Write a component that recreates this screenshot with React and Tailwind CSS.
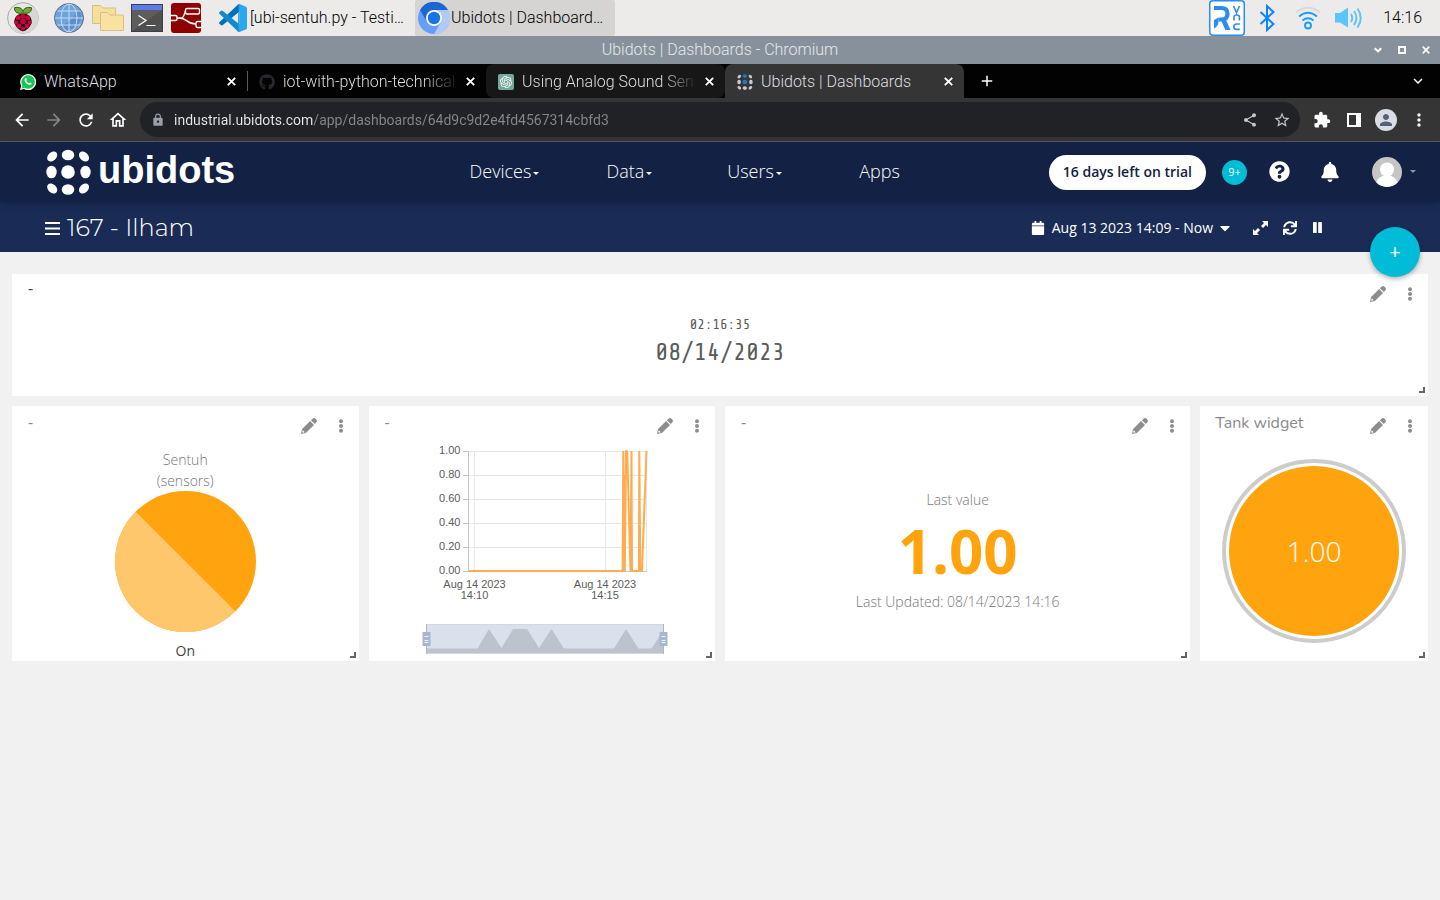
import React from "react";
import {
  MdArrowBack,
  MdArrowForward,
  MdRefresh,
  MdOutlineHome,
  MdLock,
  MdShare,
  MdStarBorder,
  MdExtension,
  MdMoreVert,
  MdPerson,
  MdAdd,
  MdKeyboardArrowDown,
} from "react-icons/md";
import {
  FaBell,
  FaQuestionCircle,
  FaCalendar,
  FaSync,
  FaEllipsisV,
  FaGithub,
  FaCaretDown,
} from "react-icons/fa";
import { SiOpenai } from "react-icons/si";

const roboto = "font-['Roboto','Liberation_Sans',sans-serif]";
const openSans = "font-['Open_Sans','Noto_Sans',sans-serif]";

/* ---------- desktop panel icons ---------- */

function RaspberryIcon() {
  const berries = [
    [16, 14.2, 2.7], [11.2, 15.8, 2.7], [20.8, 15.8, 2.7], [16, 19.3, 3],
    [9.2, 20.6, 2.3], [22.8, 20.6, 2.3], [12, 24, 2.6], [20, 24, 2.6], [16, 26.6, 2.3],
  ];
  return (
    <svg viewBox="0 0 32 32" className="size-8" aria-hidden="true">
      <circle cx="16" cy="16" r="15.4" fill="#e8e8e8" stroke="#a9a9a9" />
      <path d="M5 27 27 5A15 15 0 0 1 5 27Z" fill="#d6d6d6" />
      <path d="M16 11.500c-6 .2-9.300 4.500-8.500 9 .8 4.500 5.500 8.500 8.500 8.800 3-.3 7.700-4.300 8.500-8.800.8-4.500-2.500-8.800-8.500-9Z" fill="#2a0611" />
      {berries.map(([x, y, r]) => (
        <circle key={`${x}-${y}`} cx={x} cy={y} r={r - 0.2} fill="#c7053d" />
      ))}
      <path d="M15.800 11C10 12.400 7.200 9.400 7.500 5.700c4-1 7.600.2 8.500 3.800.9-3.600 4.500-4.800 8.500-3.800.300 3.700-2.500 6.700-8.700 5.300Z" fill="#6cae2f" stroke="#1d3b0b" strokeWidth=".8" />
    </svg>
  );
}

function GlobeIcon() {
  return (
    <svg viewBox="0 0 30 30" className="size-[30px]" aria-hidden="true">
      <circle cx="15" cy="15" r="14.500" fill="#70a2dc" stroke="#5b6f86" />
      <path d="M4 24C12 22 22 14 25 5a14.500 14.500 0 0 1-21 19Z" fill="#5f8fcb" />
      <g fill="none" stroke="#c3dbf5" strokeWidth="1">
        <path d="M15 1v28M1 15h28M3.500 8h23M3.500 22h23" />
        <ellipse cx="15" cy="15" rx="8" ry="14" />
      </g>
    </svg>
  );
}

function FoldersIcon() {
  return (
    <svg viewBox="0 0 32 28" className="h-7 w-8" aria-hidden="true">
      <path d="M.5 19.500V1.500h8l2.500 2.500h12.500v15.500Z" fill="#f4df9c" stroke="#d9bf87" />
      <path d="M8.500 26.500V8.500h7l2.500 2.500h13.500v15.500Z" fill="#f7e2a0" stroke="#d9bf87" />
    </svg>
  );
}

function TerminalIcon() {
  return (
    <svg viewBox="0 0 32 28" className="h-7 w-8" aria-hidden="true">
      <rect x=".5" y=".5" width="31" height="27" fill="#5d5d5d" stroke="#3a3f4c" />
      <path d="M1 27 31 6v21Z" fill="#4f4f4f" />
      <rect x="1" y="1" width="30" height="5" fill="#5d7be8" />
      <path d="m7.500 11.500 7.500 5-7.500 5M15.500 21.500h9" fill="none" stroke="#fff" strokeWidth="1.200" />
    </svg>
  );
}

function NodeFlowIcon() {
  return (
    <svg viewBox="0 0 30 30" className="size-[30px]" aria-hidden="true">
      <rect width="30" height="30" rx="3" fill="#8f0000" />
      <g fill="none" stroke="#fff" strokeWidth="1.400">
        <path d="M0 12.500h4.500q1.500 0 1.500 1.500v2q0 1.500-1.500 1.500H0M6 15h4c4 0 3-7 5-7M8 15c9 0 7 6 17 6" />
        <rect x="14.500" y="5.500" width="14" height="5.500" rx="1.500" />
        <path d="M30 18.500h-3.500q-1.500 0-1.500 1.500v3q0 1.500 1.500 1.500H30" />
      </g>
    </svg>
  );
}

function EditorIcon() {
  return (
    <svg viewBox="0 0 28 28" className="size-7" aria-hidden="true">
      <path d="M20.500 0 27 2.800q1 .5 1 1.500v19.400q0 1-1 1.500L20.500 28Z" fill="#2aa8ee" />
      <path d="M20.500 0v7.500L3.500 21.300q-.7.500-1.300 0L.4 19.700q-.7-.7 0-1.400L19 .5Z" fill="#0070b8" />
      <path d="M20.500 28v-7.500L3.500 6.700q-.7-.5-1.300 0L.4 8.300q-.7.700 0 1.400L19 27.500Z" fill="#1089d4" />
      <path d="M20.500 0v28q-1 0-1.700-.7L19.500 0Z" fill="#1c97e0" />
    </svg>
  );
}

function ChromiumIcon() {
  return (
    <svg viewBox="0 0 32 32" className="size-8" aria-hidden="true">
      <circle cx="16" cy="16" r="16" fill="#669df6" />
      <path d="M16 16 30 8A16 16 0 0 0 2.100 8l7 12Z" fill="#1967d2" />
      <path d="M16 8h14a16 16 0 0 1-14 24l7-12Z" fill="#aecbfa" />
      <circle cx="16" cy="16" r="8" fill="#fff" />
      <circle cx="16" cy="16" r="6.200" fill="#1a73e8" />
    </svg>
  );
}

function VncIcon() {
  return (
    <svg viewBox="0 0 36 36" className="size-9" role="img" aria-label="VNC server">
      <rect x=".75" y=".75" width="34.500" height="34.500" rx="3" fill="#fff" stroke="#2d8cf0" strokeWidth="1.500" />
      <path d="M5 8h7.500q6 0 6 5.700T12.500 19.500H9.500" fill="none" stroke="#2d8cf0" strokeWidth="4.200" />
      <path d="M12 20h5l4.500 10h-5.200ZM5 28.500v-8.500l4.500-2.600v3.800q0 5-4.500 7.300Z" fill="#2d8cf0" />
      <g fill="none" stroke="#2d8cf0" strokeWidth="1.600">
        <path d="m24.500 6 3 6.500 3-6.500M25 20.500v-3.500q0-2 2.700-2t2.700 2v3.500M30.800 24h-3q-3 0-3 2.700t3 2.700h3" />
      </g>
    </svg>
  );
}

function BluetoothIcon() {
  return (
    <svg viewBox="0 0 16 28" className="h-7 w-4" role="img" aria-label="Bluetooth">
      <path d="m1.500 8 13 12L8 26V2l6.500 6-13 12" fill="none" stroke="#0a84ff" strokeWidth="2" />
    </svg>
  );
}

function WifiIcon() {
  return (
    <svg viewBox="0 0 26 24" className="h-6 w-[26px]" role="img" aria-label="Wireless network">
      <g fill="none" strokeWidth="1.900">
        <path d="M1 6.500q12-9.500 24 0" stroke="#d9d9d9" />
        <path d="M4 10.500q9-7.500 18 0M7.500 14.500q5.500-4.500 11 0" stroke="#1b9df5" />
        <circle cx="13" cy="19.500" r="3" stroke="#1b9df5" />
      </g>
    </svg>
  );
}

function VolumeIcon() {
  return (
    <svg viewBox="0 0 27 22" className="h-[22px] w-[27px]" role="img" aria-label="Volume">
      <path d="M0 6h5l8-5.500v20L5 15.500H0Z" fill="#5ac4fb" />
      <g fill="none" stroke="#5ac4fb" strokeWidth="1.900">
        <path d="M16 7q2.500 4 0 8M19 4q5 7 0 14M22.500 1.500q6.500 9.500 0 19" />
      </g>
    </svg>
  );
}

/* ---------- favicons, logo and small glyphs ---------- */

function WhatsAppFavicon() {
  return (
    <svg viewBox="0 0 16 16" className="size-4 shrink-0" aria-hidden="true">
      <path d="M0 16 1.200 12A8 8 0 1 1 4 14.900Z" fill="#fff" />
      <path d="m1.600 14.400.8-3A6.700 6.700 0 1 1 4.700 13.700Z" fill="#17c653" />
      <path d="M5.200 4.200c.5-.5 1-.3 1.200.2l.5 1.200c.1.400-.6.900-.6 1.200.5 1.100 1.400 1.900 2.600 2.400.4 0 .8-.9 1.100-.8l1.400.7c.4.3.1 1.100-.4 1.500-.8.600-1.900.4-2.900 0C6.300 9.800 4.900 8 4.600 6.800c-.2-1 0-1.900.6-2.600Z" fill="#fff" />
    </svg>
  );
}

function GptFavicon() {
  return (
    <span className="flex size-4 shrink-0 items-center justify-center rounded-[2px] bg-[#74aa9c] text-white">
      <SiOpenai size={12} />
    </span>
  );
}

const dotRing = [
  [5.200, 5.500, 5.800, 4.100, -45], [21, 4, 6.300, 5.200, 0], [37, 5.500, 5.800, 4.100, 45],
  [4.500, 21, 5.200, 6.300, 0], [38.500, 21, 5.200, 6.300, 0],
  [5.200, 37.500, 5.800, 4.100, 45], [21, 38.500, 6.300, 5.200, 0], [37, 37.500, 5.800, 4.100, -45],
];

function DotMark({ className, ring, core, top }) {
  return (
    <svg viewBox="-1 -2 45 46" className={className} aria-hidden="true">
      {dotRing.map(([x, y, rx, ry, a], i) => (
        <ellipse key={i} cx={x} cy={y} rx={rx} ry={ry} fill={i === 1 ? top : ring} transform={`rotate(${a} ${x} ${y})`} />
      ))}
      <circle cx="21" cy="21" r="6.800" fill={core} />
    </svg>
  );
}

function PencilIcon() {
  return (
    <svg viewBox="0 0 16 16" className="size-4" aria-hidden="true">
      <path d="M11.300.9q1.700-1.700 3.200-.1l.8.800q1.400 1.500-.1 3l-1.400 1.400-3.900-3.700Z" fill="currentColor" />
      <path d="M9.100 3.100 13 6.900 4.900 14.900 0 16l1.100-5Z" fill="currentColor" />
      <path d="m1.700 12.300 2 2-1.800.5-.7-.7Z" fill="#fff" />
    </svg>
  );
}

function ExpandIcon() {
  return (
    <svg viewBox="0 0 15 14" className="h-[14px] w-[15px]" fill="currentColor" aria-hidden="true">
      <path d="M9 0h6v6l-2-2-3 3-2-2 3-3ZM6 14H0V8l2 2 3-3 2 2-3 3Z" />
    </svg>
  );
}

function PauseIcon() {
  return (
    <svg viewBox="0 0 9 11" className="h-[11px] w-[9px]" fill="currentColor" aria-hidden="true">
      <rect width="3.700" height="11" rx=".6" />
      <rect x="5.200" width="3.700" height="11" rx=".6" />
    </svg>
  );
}

function CrossIcon({ className }) {
  return (
    <svg viewBox="0 0 9 9" className={className} aria-hidden="true">
      <path d="m.8.800 7.400 7.400m0-7.400L.8 8.200" fill="none" stroke="currentColor" strokeWidth="1.900" />
    </svg>
  );
}

/* ---------- browser chrome ---------- */

function DesktopPanel() {
  return (
    <header className={`flex h-9 items-center bg-[#edebea] pl-[7px] pr-[18px] text-base font-light text-black ${roboto}`}>
      <button aria-label="Menu"><RaspberryIcon /></button>
      <button aria-label="Web browser" className="ml-[15px]"><GlobeIcon /></button>
      <button aria-label="File manager" className="ml-2"><FoldersIcon /></button>
      <button aria-label="Terminal" className="ml-[7px]"><TerminalIcon /></button>
      <button aria-label="Node-RED" className="ml-2"><NodeFlowIcon /></button>
      <button className="ml-[15px] flex h-9 w-[199px] items-center gap-[3px] whitespace-nowrap pl-[3px]">
        <EditorIcon />
        <span>[ubi-sentuh.py - Testi…</span>
      </button>
      <button className="flex h-9 w-[200px] items-center gap-px whitespace-nowrap rounded-[2px] bg-[#d5d4d2] pl-[3px]">
        <ChromiumIcon />
        <span>Ubidots | Dashboard…</span>
      </button>
      <div className="ml-auto flex items-center">
        <VncIcon />
        <span className="ml-[14px]"><BluetoothIcon /></span>
        <span className="ml-5"><WifiIcon /></span>
        <span className="ml-[14px]"><VolumeIcon /></span>
        <time className="ml-[21px]">14:16</time>
      </div>
    </header>
  );
}

function WindowTitle() {
  return (
    <div className={`grid h-7 grid-cols-[1fr_auto_1fr] items-center bg-[#87919b] px-[10px] text-base font-light text-[#e4e8eb] ${roboto}`}>
      <span />
      <span>Ubidots | Dashboards - Chromium</span>
      <div className="flex items-center gap-4 justify-self-end text-white">
        <button aria-label="Minimize">
          <svg viewBox="0 0 8 8" className="size-2"><path d="m.7 2.300 3.300 3 3.300-3" fill="none" stroke="currentColor" strokeWidth="2" /></svg>
        </button>
        <button aria-label="Maximize">
          <svg viewBox="0 0 8 8" className="size-2"><rect x="1" y="1" width="6" height="6" fill="none" stroke="currentColor" strokeWidth="2" /></svg>
        </button>
        <button aria-label="Close"><CrossIcon className="size-2" /></button>
      </div>
    </div>
  );
}

function Tab({ icon, title, tone, fade }) {
  return (
    <div className={`flex h-[34px] w-[239px] items-center pl-3 pr-[11px] pt-px ${tone}`}>
      {icon}
      <button
        className={`ml-2 flex-1 whitespace-nowrap text-left text-[#dedfe1] ${fade ? "[mask-image:linear-gradient(to_right,black_76%,transparent_96%)]" : ""}`}
      >
        {title}
      </button>
      <button aria-label={`Close ${title}`} className="text-white"><CrossIcon className="size-[9px]" /></button>
    </div>
  );
}

function TabStrip() {
  return (
    <div className={`flex h-[34px] items-center bg-[#020202] px-2 text-base font-light ${roboto}`}>
      <Tab icon={<WhatsAppFavicon />} title="WhatsApp" tone="" />
      <Tab
        icon={<FaGithub size={16} color="#24292f" className="shrink-0" />}
        title="iot-with-python-technical"
        tone="bg-[linear-gradient(#5a5a5a,#5a5a5a)] bg-[length:1px_20px] bg-[position:left_center] bg-no-repeat"
        fade
      />
      <Tab icon={<GptFavicon />} title="Using Analog Sound Sen" tone="rounded-lg bg-[#171717]" fade />
      <Tab
        icon={<DotMark className="size-4 shrink-0" ring="#c9cbce" core="#1f7ac4" top="#1f7ac4" />}
        title="Ubidots | Dashboards"
        tone="rounded-t-lg bg-[#353535]"
      />
      <button aria-label="New tab" className="ml-[14px] text-white"><MdAdd size={18} /></button>
      <button aria-label="Search tabs" className="ml-auto mr-[5px] text-white"><MdKeyboardArrowDown size={18} /></button>
    </div>
  );
}

function Toolbar() {
  return (
    <div className={`flex h-11 items-center border-b border-[#5a5b5d] bg-[#353535] pl-3 pr-[11px] text-white ${roboto}`}>
      <div className="flex items-center gap-3">
        <button aria-label="Back"><MdArrowBack size={20} /></button>
        <button aria-label="Forward" className="text-[#858585]"><MdArrowForward size={20} /></button>
        <button aria-label="Reload"><MdRefresh size={20} /></button>
        <button aria-label="Home"><MdOutlineHome size={20} /></button>
      </div>
      <div className="ml-3 flex h-[35px] flex-1 items-center rounded-full bg-[#202226] pl-[11px] pr-[9px]">
        <MdLock size={14} className="text-[#9aa0a6]" />
        <input
          aria-label="Address"
          readOnly
          value="industrial.ubidots.com/app/dashboards/64d9c9d2e4fd4567314cbfd3"
          className="ml-[9px] min-w-0 flex-1 bg-[linear-gradient(to_right,#e8eaed_139px,#85878b_139px)] bg-clip-text text-sm text-transparent outline-none"
        />
        <button aria-label="Share" className="text-[#c3c5c8]"><MdShare size={16} /></button>
        <button aria-label="Bookmark this page" className="ml-[15px] text-[#c3c5c8]"><MdStarBorder size={18} /></button>
      </div>
      <button aria-label="Extensions" className="ml-[13px]"><MdExtension size={18} /></button>
      <button aria-label="Side panel" className="ml-4">
        <svg viewBox="0 0 14 14" className="size-[14px]"><path d="M0 0h14v14H0ZM2 2v10h7V2Z" fill="currentColor" fillRule="evenodd" /></svg>
      </button>
      <button aria-label="Profile" className="ml-[14px] flex size-[22px] items-center justify-center rounded-full bg-[#dadde3] text-[#55617a]">
        <MdPerson size={18} />
      </button>
      <button aria-label="Browser menu" className="ml-3"><MdMoreVert size={20} /></button>
    </div>
  );
}

/* ---------- application header ---------- */

function Caret({ className = "" }) {
  return <span className={`inline-block border-x-[3px] border-t-[3px] border-x-transparent border-t-current ${className}`} />;
}

const navItems = [
  { label: "Devices", menu: true },
  { label: "Data", menu: true },
  { label: "Users", menu: true },
  { label: "Apps", menu: false },
];

function AppHeader() {
  return (
    <div className={`flex h-[60px] items-center bg-[#132144] pb-px pr-6 text-white shadow-[0_2px_6px_rgba(0,0,0,0.25)] ${openSans}`}>
      <a href="#home" aria-label="ubidots" className="flex w-[442px] items-center gap-[7px] pl-[46px]">
        <DotMark className="h-[46px] w-[45px] shrink-0" ring="#fff" core="#fff" top="#fff" />
        <span className="pb-1 font-['Liberation_Sans',Arial,sans-serif] text-[38px] font-bold leading-[38px]">ubidots</span>
      </a>
      <nav className="grid w-[500px] grid-cols-4 pb-px">
        {navItems.map((n) => (
          <a key={n.label} href={`#${n.label.toLowerCase()}`} className="flex items-center justify-center gap-[2px] text-lg font-light">
            {n.label}
            {n.menu && <Caret className="mt-1" />}
          </a>
        ))}
      </nav>
      <div className="ml-auto flex items-center">
        <button className="mt-px h-[35px] whitespace-nowrap rounded-full bg-white px-[14px] text-sm font-semibold text-[#132144]">
          16 days left on trial
        </button>
        <button aria-label="Notifications 9+" className="ml-4 mt-px size-[25px] rounded-full bg-[#00bcd6] text-[11px]">9+</button>
        <button aria-label="Help" className="ml-[22px]"><FaQuestionCircle size={21} /></button>
        <button aria-label="Alerts" className="ml-[30px]"><FaBell size={20} /></button>
        <button aria-label="Account" className="ml-8 flex items-center gap-2 text-[#8d95a8]">
          <svg viewBox="0 0 30 30" className="size-[30px]">
            <clipPath id="avatar"><circle cx="15" cy="15" r="15" /></clipPath>
            <g clipPath="url(#avatar)">
              <rect width="30" height="30" fill="#c5c5c5" />
              <circle cx="15" cy="12.500" r="7" fill="#fff" />
              <ellipse cx="15" cy="28" rx="11" ry="10" fill="#fff" />
            </g>
          </svg>
          <Caret />
        </button>
      </div>
    </div>
  );
}

function DashboardBar() {
  return (
    <div className={`relative flex h-[50px] items-center bg-[#1a2c55] pl-[45px] pr-[118px] pt-px text-white ${openSans}`}>
      <button aria-label="Dashboards menu" className="mt-[2px]">
        <svg viewBox="0 0 15 13" className="h-[13px] w-[15px]"><path d="M0 1h15M0 6.500h15M0 12h15" stroke="currentColor" strokeWidth="2" /></svg>
      </button>
      <h1 className="ml-[7px] font-['Montserrat','Inter',sans-serif] text-2xl font-light">167 - Ilham</h1>
      <button className="ml-auto flex items-center whitespace-nowrap text-sm">
        <FaCalendar size={14} />
        <span className="ml-[7px]">Aug 13 2023 14:09 - Now</span>
        <FaCaretDown size={16} className="ml-1" />
      </button>
      <button aria-label="Full screen" className="ml-5"><ExpandIcon /></button>
      <button aria-label="Refresh" className="ml-[15px]"><FaSync size={14} /></button>
      <button aria-label="Pause" className="ml-4"><PauseIcon /></button>
      <button
        aria-label="Add new widget"
        className="absolute -bottom-[25px] right-5 size-[50px] rounded-full bg-[#00bcd6] text-xl shadow-[0_2px_5px_rgba(0,0,0,0.3)]"
      >
        +
      </button>
    </div>
  );
}

/* ---------- widgets ---------- */

function Widget({ title, titleClass, className, children }) {
  return (
    <section className={`relative flex flex-col bg-white ${className}`}>
      <div className="flex h-10 shrink-0 items-start justify-between pr-[11px]">
        <h2 className={`text-base leading-6 ${titleClass}`}>{title}</h2>
        <div className="flex h-10 items-center gap-[17px] text-[#8d8d8d]">
          <button aria-label="Edit widget"><PencilIcon /></button>
          <button aria-label="Widget options"><FaEllipsisV size={14} /></button>
        </div>
      </div>
      {children}
      <span className="absolute bottom-[3px] right-[3px] size-[6px] border-b-2 border-r-2 border-[#666]" />
    </section>
  );
}

const yTicks = ["1.00", "0.80", "0.60", "0.40", "0.20", "0.00"];
const xTicks = [
  { x: 62.5, time: "14:10" },
  { x: 193, time: "14:15" },
];

function LineChart() {
  return (
    <svg viewBox="0 0 260 216" className="h-[216px] w-[260px] font-['Liberation_Sans',Arial,sans-serif] text-[11px]" fill="#5c5c5c">
      <g stroke="#e6e6e6">
        {yTicks.map((t, i) => (
          <path key={t} d={`M56 ${11.5 + i * 24}H235`} />
        ))}
        <path d="M62.500 11V131M193.500 11V131M234.500 11V131" />
      </g>
      <g stroke="#c4c4c4">
        {yTicks.map((t, i) => (
          <path key={t} d={`M51 ${11.5 + i * 24}h5`} />
        ))}
        <path d="M56.500 11V131.500H235" fill="none" />
      </g>
      {yTicks.map((t, i) => (
        <text key={t} x="48.500" y={14 + i * 24} textAnchor="end">{t}</text>
      ))}
      {xTicks.map((t) => (
        <g key={t.time} textAnchor="middle">
          <text x={t.x} y="148">Aug 14 2023</text>
          <text x={t.x} y="159">{t.time}</text>
        </g>
      ))}
      <path
        d="M56.500 131H210.600L211.300 11 211.800 131 212.500 35 212.800 131 214 11H215L215.300 28 215.200 11 218.500 131 219.500 11 220 131H227L227.300 11 228.300 131H230L234.500 11"
        fill="none"
        stroke="#ffab4f"
        strokeWidth="2"
        strokeLinejoin="bevel"
      />
      <rect x="14.500" y="184.500" width="237" height="29" fill="#dae1ec" stroke="#d5d9df" />
      <path d="M15 208.500H65.500L77 189 89.500 208 101 189H115L127 208 139.500 189 152 208.500H202L214 189 226.500 208.500H239.500L251 191V213H15Z" fill="#bcc3cd" />
      <path d="M14.500 184V214M251.500 184V214" stroke="#a7b7cc" />
      {[10.5, 247.5].map((x) => (
        <g key={x} transform={`translate(${x} 192)`}>
          <rect width="8" height="14" fill="#a7b7cc" />
          <path d="M2 4.500h4M2 8.500h4M2 10.500h4" stroke="#eef2f7" strokeWidth="1" />
        </g>
      ))}
    </svg>
  );
}

function Dashboard() {
  return (
    <main className={`grid grow grid-cols-12 content-start gap-[10px] px-3 pt-[22px] ${openSans}`}>
      <Widget title="-" titleClass="pl-4 pt-[2px] text-[#444]" className="col-span-12 h-[122px]">
        <div className="flex flex-col items-center pt-px font-['Share_Tech_Mono','DejaVu_Sans_Mono',monospace] text-[#5a5a5a]">
          <time className="text-sm leading-5">02:16:35</time>
          <time className="text-2xl leading-9">08/14/2023</time>
        </div>
      </Widget>

      <Widget title="-" titleClass="pl-4 pt-1 text-[#8a8a8a]" className="col-span-3 h-[255px]">
        <div className="flex flex-col items-center pt-[3px] text-sm leading-[21px] text-[#777]">
          <p className="font-light">Sentuh</p>
          <p className="font-light">(sensors)</p>
          <svg viewBox="0 0 142 142" className="size-[142px]" role="img" aria-label="Sensor is on">
            <circle cx="71.500" cy="70.500" r="70.500" fill="#ffa40e" />
            <path d="M21.650 20.650A70 70 0 0 0 121.350 120.350Z" fill="#ffc76c" />
          </svg>
          <p className="mt-[7px] text-[#444]">On</p>
        </div>
      </Widget>

      <Widget title="-" titleClass="pl-4 pt-1 text-[#8a8a8a]" className="col-span-3 h-[255px]">
        <div className="-mt-[6px] flex justify-center">
          <LineChart />
        </div>
      </Widget>

      <Widget title="-" titleClass="pl-4 pt-1 text-[#8a8a8a]" className="col-span-4 h-[255px]">
        <div className="flex flex-col items-center pt-11 text-sm leading-5 text-[#777]">
          <p className="font-light">Last value</p>
          <p className="my-[6px] text-[60px] font-bold leading-[70px] text-[#ffa40e]">1.00</p>
          <p className="font-light">Last Updated: 08/14/2023 14:16</p>
        </div>
      </Widget>

      <Widget
        title="Tank widget"
        titleClass="pl-[15px] pt-[5px] font-['Nunito','Open_Sans',sans-serif] text-[#8a8a8a]"
        className="col-span-2 h-[255px]"
      >
        <div className="flex justify-center pt-[13px]">
          <div className="flex size-[184px] items-center justify-center rounded-full border-4 border-[#ccc] p-[3px]">
            <div className="flex size-full items-center justify-center rounded-full bg-[#ffa40e] pb-px text-[28px] font-light leading-8 text-white">
              1.00
            </div>
          </div>
        </div>
      </Widget>
    </main>
  );
}

export default function App() {
  return (
    <div className="flex min-h-screen flex-col bg-[#f1f1f1]">
      <DesktopPanel />
      <WindowTitle />
      <TabStrip />
      <Toolbar />
      <div className="relative z-20"><AppHeader /></div>
      <div className="relative z-10"><DashboardBar /></div>
      <Dashboard />
    </div>
  );
}
